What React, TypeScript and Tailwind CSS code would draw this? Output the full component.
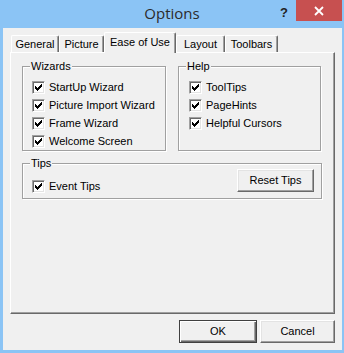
import React from 'react';

function Check() {
  return (
    <span className="w-[13px] h-[13px] shrink-0 bg-white border border-t-[#a0a0a0] border-l-[#a0a0a0] border-b-white border-r-white shadow-[inset_1px_1px_0_#696969,inset_-1px_-1px_0_#e3e3e3] flex items-center justify-center">
      <svg width="7" height="7" viewBox="0 0 7 7" shapeRendering="crispEdges">
        <path
          fill="#000"
          d="M0 2h1v3H0z M1 3h1v3H1z M2 4h1v3H2z M3 3h1v3H3z M4 2h1v3H4z M5 1h1v3H5z M6 0h1v3H6z"
        />
      </svg>
    </span>
  );
}

function CheckRow({ label }: { label: string }) {
  return (
    <div className="h-[18px] flex items-center gap-[4px]">
      <Check />
      <span className="leading-[13px]">{label}</span>
    </div>
  );
}

function GroupBox({
  title,
  className,
  children,
}: {
  title: string;
  className: string;
  children: React.ReactNode;
}) {
  return (
    <div
      className={
        'relative border border-[#a0a0a0] shadow-[inset_1px_1px_0_#ffffff,1px_1px_0_#ffffff] ' + className
      }
    >
      <span className="absolute left-[7px] -top-[7px] px-[1px] bg-[#f0f0f0] leading-[13px]">{title}</span>
      {children}
    </div>
  );
}

function Button({ label, w, isDefault }: { label: string; w: string; isDefault?: boolean }) {
  return (
    <button
      className={
        'h-[23px] bg-[#f0f0f0] flex items-center justify-center leading-[13px] ' +
        w +
        (isDefault
          ? ' border border-[#404040] shadow-[inset_1px_1px_0_#ffffff,inset_-1px_-1px_0_#696969,inset_-2px_-2px_0_#a0a0a0]'
          : ' border border-t-white border-l-white border-b-[#696969] border-r-[#696969] shadow-[inset_-1px_-1px_0_#a0a0a0,inset_1px_1px_0_#e3e3e3]')
      }
    >
      {label}
    </button>
  );
}

const tabs = [
  { label: 'General', w: 'w-[48px]' },
  { label: 'Picture', w: 'w-[45px]' },
  { label: 'Ease of Use', w: 'w-[72px]', active: true },
  { label: 'Layout', w: 'w-[49px]' },
  { label: 'Toolbars', w: 'w-[53px]' },
];

export default function App() {
  return (
    <div className="w-[344px] h-[353px] bg-[#8bc4f5] flex flex-col font-['Liberation_Sans',Arial,sans-serif] text-[11px] text-black">
      {/* title bar */}
      <div className="h-[28px] shrink-0 relative flex justify-center">
        <span className="mt-[3px] text-[15px] leading-[20px] text-[#2b2b2b] font-['Open_Sans',sans-serif]">Options</span>
        <span className="absolute left-[280px] top-[5px] text-[13px] leading-[16px] font-bold text-[#222]">?</span>
        <div className="absolute left-[296px] top-0 w-[46px] h-[21px] bg-[#c75050] flex items-center justify-center">
          <svg width="10" height="10" viewBox="0 0 10 10">
            <path d="M1 1L9 9M9 1L1 9" stroke="#fff" strokeWidth="1.8" />
          </svg>
        </div>
      </div>

      {/* client */}
      <div className="flex-1 ml-[3px] mr-[2px] mb-[3px] bg-[#f0f0f0] flex flex-col">
        <div className="h-[24px] shrink-0 pl-[8px] flex items-end relative z-10">
          {tabs.map((t) =>
            t.active ? (
              <div
                key={t.label}
                className={
                  t.w +
                  ' h-[21px] -mb-[1px] bg-[#f0f0f0] border-l border-t border-white border-r border-r-[#696969] shadow-[inset_-1px_0_0_#a0a0a0] rounded-t-[2px] flex justify-center pt-[3px] leading-[13px]'
                }
              >
                {t.label}
              </div>
            ) : (
              <div
                key={t.label}
                className={
                  t.w +
                  ' h-[17px] bg-[#f0f0f0] border-l border-t border-white border-r border-r-[#696969] shadow-[inset_-1px_0_0_#a0a0a0] rounded-t-[2px] flex justify-center pt-[2px] leading-[13px]'
                }
              >
                {t.label}
              </div>
            )
          )}
        </div>

        <div className="ml-[7px] w-[325px] h-[262px] shrink-0 border border-t-white border-l-white border-r-[#696969] border-b-[#696969] shadow-[inset_-1px_-1px_0_#a0a0a0] pl-[11px] pt-[13px]">
          <div className="flex gap-[12px]">
            <GroupBox title="Wizards" className="w-[144px] h-[85px] pl-[9px] pt-[11px]">
              <CheckRow label="StartUp Wizard" />
              <CheckRow label="Picture Import Wizard" />
              <CheckRow label="Frame Wizard" />
              <CheckRow label="Welcome Screen" />
            </GroupBox>
            <GroupBox title="Help" className="w-[143px] h-[85px] pl-[10px] pt-[11px]">
              <CheckRow label="ToolTips" />
              <CheckRow label="PageHints" />
              <CheckRow label="Helpful Cursors" />
            </GroupBox>
          </div>
          <GroupBox title="Tips" className="mt-[12px] w-[300px] h-[36px] pl-[9px] pr-[7px] flex justify-between items-start">
            <div className="mt-[13px]">
              <CheckRow label="Event Tips" />
            </div>
            <div className="mt-[5px]">
              <Button label="Reset Tips" w="w-[77px]" />
            </div>
          </GroupBox>
        </div>

        <div className="mt-[6px] pr-[7px] flex justify-end gap-[3px]">
          <Button label="OK" w="w-[78px]" isDefault />
          <Button label="Cancel" w="w-[75px]" />
        </div>
      </div>
    </div>
  );
}
